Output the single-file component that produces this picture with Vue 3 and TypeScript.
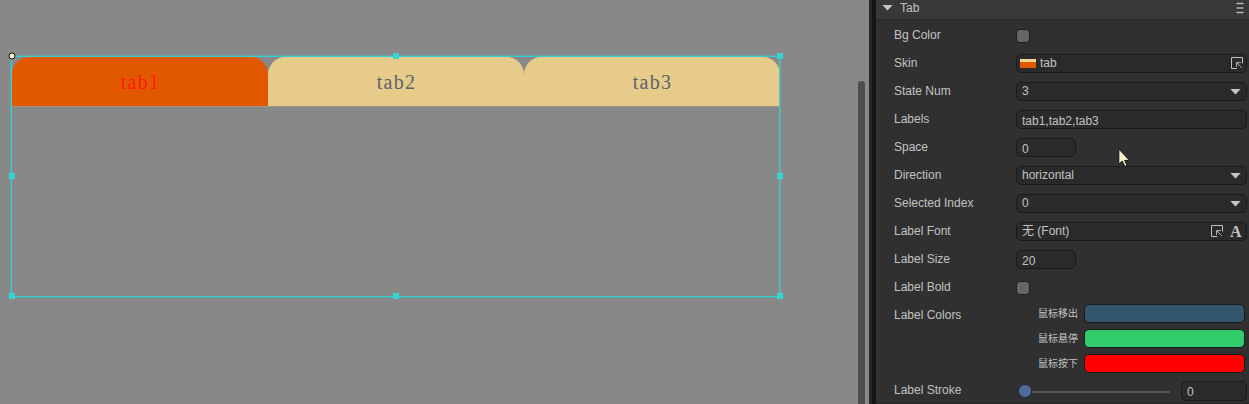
<script setup lang="ts">
type Kind = 'check' | 'skin' | 'select' | 'text' | 'short' | 'font' | 'colors' | 'slider'

interface Row {
  label: string
  kind: Kind
  value?: string
}

const rows: Row[] = [
  { label: 'Bg Color', kind: 'check' },
  { label: 'Skin', kind: 'skin', value: 'tab' },
  { label: 'State Num', kind: 'select', value: '3' },
  { label: 'Labels', kind: 'text', value: 'tab1,tab2,tab3' },
  { label: 'Space', kind: 'short', value: '0' },
  { label: 'Direction', kind: 'select', value: 'horizontal' },
  { label: 'Selected Index', kind: 'select', value: '0' },
  { label: 'Label Font', kind: 'font', value: '无 (Font)' },
  { label: 'Label Size', kind: 'short', value: '20' },
  { label: 'Label Bold', kind: 'check' },
  { label: 'Label Colors', kind: 'colors' },
  { label: 'Label Stroke', kind: 'slider', value: '0' },
]

const colors = [
  { name: '鼠标移出', tone: 'out' },
  { name: '鼠标悬停', tone: 'over' },
  { name: '鼠标按下', tone: 'down' },
]

const tabs = ['tab1', 'tab2', 'tab3']
const handles = ['n', 'ne', 'w', 'e', 'sw', 's', 'se']
</script>

<template>
  <div class="editor">
    <div class="stage">
      <div class="tab-bar">
        <div v-for="(tab, i) in tabs" :key="tab" class="tab" :class="{ active: i === 0 }">
          <span>{{ tab }}</span>
        </div>
      </div>
      <div class="selection">
        <i v-for="h in handles" :key="h" class="handle" :class="h"></i>
        <i class="pivot"></i>
      </div>
      <div class="scrollbar"></div>
    </div>
    <div class="splitter"></div>
    <div class="inspector">
      <header class="head">
        <svg class="fold" width="11" height="6" viewBox="0 0 11 6"><path d="M.3 0h10.4L5.5 5.6z" /></svg>
        <span>Tab</span>
        <svg class="menu" width="8" height="10" viewBox="0 0 8 10">
          <path d="M.5 .5h7M.5 5h7M.5 9.5h7" />
        </svg>
      </header>
      <div v-for="row in rows" :key="row.label" class="row" :class="row.kind">
        <label class="name">{{ row.label }}</label>
        <i v-if="row.kind === 'check'" class="box"></i>
        <div v-else-if="row.kind === 'colors'" class="swatches">
          <div v-for="c in colors" :key="c.tone" class="swatch-row">
            <span>{{ c.name }}</span>
            <i class="swatch" :class="c.tone"></i>
          </div>
        </div>
        <div v-else-if="row.kind === 'slider'" class="slide">
          <i class="knob"></i>
          <i class="track"></i>
          <div class="field"><span>{{ row.value }}</span></div>
        </div>
        <div v-else class="field">
          <i v-if="row.kind === 'skin'" class="thumb"></i>
          <span class="value">{{ row.value }}</span>
          <svg v-if="row.kind === 'skin' || row.kind === 'font'" class="pick" width="13" height="13" viewBox="0 0 13 13">
            <path class="frame" d="M6 11.5H.5V.5h11V6.5" />
            <path class="arrow" d="M5.5 10V5.5H10M5.8 5.8l5 5M6 7.5l1.5-1.5" />
          </svg>
          <b v-if="row.kind === 'font'" class="glyph">A</b>
          <svg v-if="row.kind === 'select'" class="caret" width="11" height="6" viewBox="0 0 11 6">
            <path d="M.3 0h10.4L5.5 5.6z" />
          </svg>
        </div>
      </div>
    </div>
    <svg class="pointer" width="13" height="20" viewBox="0 0 13 20">
      <path d="M.8 1v15.2l3.4-3.1 2.6 5.3 2.3-1-2.5-5h5z" />
    </svg>
  </div>
</template>

<style>
body {
  margin: 0;
  overflow: hidden;
}
</style>

<style scoped>
* {
  box-sizing: border-box;
}
.editor {
  position: relative;
  display: flex;
  width: 1249px;
  height: 404px;
  overflow: hidden;
  background: #303030;
  color: #c2c2c2;
  font: 12px/14px "Liberation Sans", "Noto Sans CJK SC", sans-serif;
}
.stage {
  position: relative;
  width: 869px;
  padding: 57px 0 0 12px;
  background: #888;
}
.tab-bar {
  display: flex;
  width: 768px;
}
.tab {
  display: flex;
  justify-content: center;
  width: 256px;
  height: 49px;
  padding: 13px 0 0 1px;
  border-radius: 17px 17px 0 0 / 18px 18px 0 0;
  background: #e6cb8a;
  box-shadow: 0 0.5px 0 #b5a47c;
  color: #5b6468;
  font: 20px/24px "Liberation Serif", serif;
  letter-spacing: 1.3px;
}
.tab.active {
  background: #e15800;
  color: #ff1b00;
}
.selection {
  position: absolute;
  left: 11px;
  top: 56px;
  width: 769px;
  height: 241px;
  border: 1px solid #35d0cf;
  box-shadow: 0 0 0 0.4px #35d0cf;
}
.handle,
.pivot {
  position: absolute;
  width: 6px;
  height: 6px;
  background: #35d5d3;
  transform: translate(-50%, -50%);
}
.n { left: 384px; top: -1px; }
.ne { left: 768px; top: -1px; }
.w { left: 0; top: 119px; }
.e { left: 768px; top: 119px; }
.sw { left: 0; top: 239px; }
.s { left: 384px; top: 239px; }
.se { left: 768px; top: 239px; }
.pivot {
  left: 0;
  top: -1px;
  width: 7px;
  height: 7px;
  border: 1px solid #111;
  border-radius: 50%;
  background: #ffe9c4;
}
.scrollbar {
  position: absolute;
  left: 858px;
  top: 81px;
  width: 7px;
  height: 330px;
  border-radius: 3px;
  background: #4d4d4d;
}
.splitter {
  width: 7px;
  border-left: 3px solid #262626;
  background: #151515;
}
.inspector {
  width: 373px;
  box-shadow: inset 0 -1px 0 #272727;
}
.head {
  display: flex;
  align-items: center;
  height: 20px;
  margin-bottom: 1px;
  padding: 0 5px 4px 6px;
  border-bottom: 1px solid #272727;
  background: #383838;
}
.fold {
  fill: #c4c4c4;
  margin-right: 7px;
}
.menu {
  margin-left: auto;
  fill: none;
  stroke: #b4b4b4;
  stroke-width: 1.4;
  overflow: visible;
}
.row {
  display: flex;
  height: 28px;
  padding: 5px 2px 0 18px;
}
.name {
  width: 122px;
  padding-top: 2px;
}
.box {
  width: 14px;
  height: 14px;
  margin-top: 3px;
  border: 1px solid #1d1d1d;
  border-radius: 4px;
  background: #666;
}
.field {
  display: flex;
  align-items: center;
  flex: 1;
  height: 19px;
  padding: 0 5px;
  border: 1px solid #1b1b1b;
  border-radius: 5px;
  background: #2a2a2a;
}
.value {
  white-space: nowrap;
  margin-top: -1px;
}
.text .value,
.short .value {
  margin-top: 3px;
}
.short .field {
  flex: 0 0 60px;
}
.skin .field {
  padding-left: 3px;
}
.thumb {
  width: 16px;
  height: 9px;
  margin-right: 4px;
  background: linear-gradient(#f1d891 0 3px, #e15800 3px);
}
.pick,
.caret {
  margin-left: auto;
}
.skin .pick {
  margin-right: -3px;
}
.frame {
  fill: none;
  stroke: #c0c0c0;
}
.arrow {
  fill: none;
  stroke: #a8a8a8;
}
.caret {
  fill: #c4c4c4;
  margin-top: 1px;
}
.glyph {
  width: 12px;
  margin: 0 -1px 0 6px;
  font: bold 16px/16px "Liberation Serif", serif;
}
.row.colors {
  height: 75px;
}
.swatches {
  display: flex;
  flex-direction: column;
  gap: 6px;
  margin-top: -2px;
}
.swatch-row {
  display: flex;
  align-items: center;
  height: 19px;
  padding-left: 22px;
  font-size: 10px;
}
.swatch {
  width: 161px;
  height: 19px;
  margin-left: 6px;
  border: 1px solid #161b1d;
  border-radius: 5px;
}
.out { background: #33566c; }
.over { background: #33cc6c; }
.down { background: #ff0000; }
.slide {
  display: flex;
  align-items: center;
  flex: 1;
  height: 20px;
}
.knob {
  width: 14px;
  height: 14px;
  margin-left: 2px;
  border: 1px solid #222a35;
  border-radius: 50%;
  background: #50699b;
}
.track {
  width: 138px;
  height: 2px;
  margin: 1px 11px 0 0;
  background: #575757;
}
.slide .field {
  height: 20px;
}
.slide .field span {
  margin-top: 2px;
}
.pointer {
  position: absolute;
  left: 1118px;
  top: 148px;
  fill: #faecc8;
  stroke: #151515;
}
</style>
